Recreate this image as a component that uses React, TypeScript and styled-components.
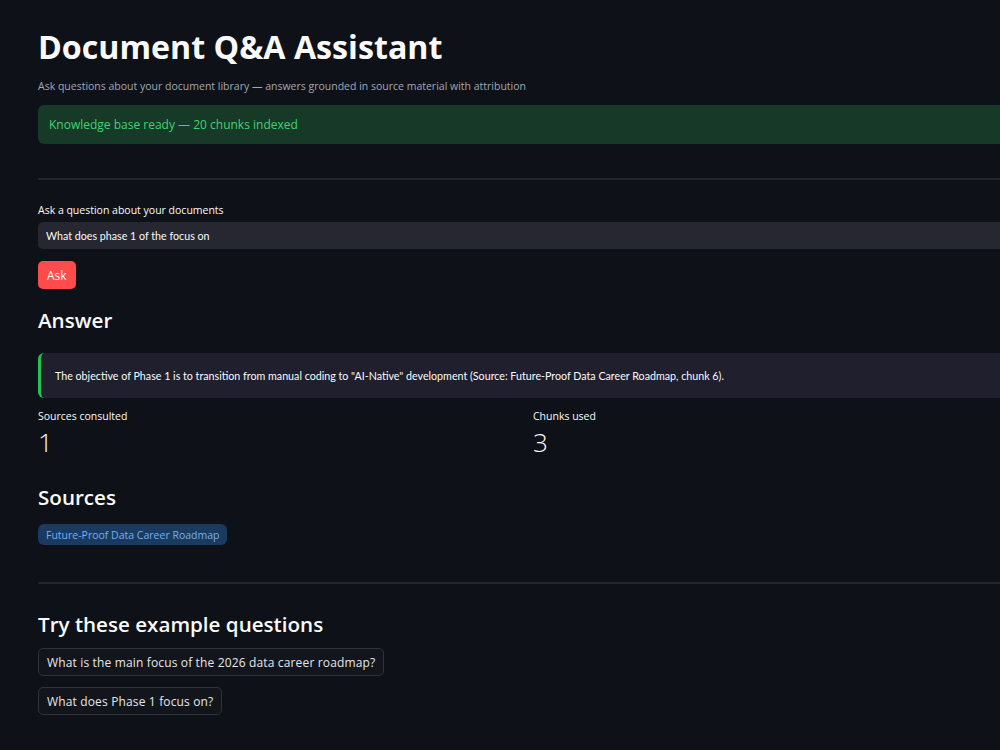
import React from "react";
import styled, { createGlobalStyle } from "styled-components";

const GlobalStyle = createGlobalStyle`
  html, body {
    margin: 0;
    padding: 0;
    background: #0e1117;
    overflow: hidden;
  }
  body {
    font-family: "Open Sans", "Noto Sans", sans-serif;
    color: #fafafa;
  }
`;

const HEAD = `"Open Sans", "Noto Sans", sans-serif`;
const BODY = `"Lato", "Noto Sans", sans-serif`;

const Page = styled.div`
  width: 974px;
  padding: 24px 0 40px 38px;
  display: flex;
  flex-direction: column;
`;

const Title = styled.h1`
  margin: 0;
  font-family: ${HEAD};
  font-weight: 700;
  font-size: 32.2px;
  line-height: 46px;
  color: #fafafa;
`;

const Caption = styled.p`
  margin: 8px 0 0;
  font-family: ${HEAD};
  font-size: 10.5px;
  line-height: 16px;
  color: #a3a8b4;
`;

const Alert = styled.div`
  margin-top: 11px;
  height: 39px;
  display: flex;
  align-items: center;
  padding: 0 11px;
  border-radius: 6px;
  background: #173928;
  color: #3dd56d;
  font-family: ${HEAD};
  font-size: 12px;
`;

const Divider = styled.hr<{ $top: number }>`
  margin: ${(p) => p.$top}px 0 0;
  border: none;
  height: 2px;
  background: #23252d;
`;

const Label = styled.label`
  margin-top: 22px;
  font-family: ${HEAD};
  font-size: 10.5px;
  line-height: 16px;
  color: #fafafa;
`;

const Input = styled.input`
  margin-top: 4px;
  height: 27px;
  box-sizing: border-box;
  border: none;
  outline: none;
  border-radius: 5px;
  background: #262730;
  padding: 0 8px;
  color: #fafafa;
  font-family: ${BODY};
  font-size: 10.7px;
`;

const AskButton = styled.button`
  margin-top: 12px;
  align-self: flex-start;
  height: 28px;
  padding: 0 9px;
  border: none;
  border-radius: 5px;
  background: #ff4b4b;
  color: #ffffff;
  font-family: ${HEAD};
  font-size: 12px;
`;

const Heading = styled.h2<{ $top: number }>`
  margin: ${(p) => p.$top}px 0 0;
  font-family: ${HEAD};
  font-weight: 600;
  font-size: 20.6px;
  line-height: 30px;
  color: #fafafa;
`;

const AnswerBox = styled.div`
  margin-top: 18px;
  height: 45px;
  display: flex;
  align-items: center;
  padding-left: 14px;
  border-left: 3px solid #21c354;
  border-radius: 6px;
  background: #1f1f2e;
  font-family: ${BODY};
  font-size: 10.7px;
  color: #fafafa;
`;

const Metrics = styled.div`
  margin-top: 10px;
  display: grid;
  grid-template-columns: 1fr 1fr;
  gap: 16px;
`;

const Metric = styled.div`
  display: flex;
  flex-direction: column;
`;

const MetricLabel = styled.div`
  font-family: ${HEAD};
  font-size: 10.5px;
  line-height: 16px;
  color: #fafafa;
`;

const MetricValue = styled.div`
  font-family: ${HEAD};
  font-weight: 300;
  font-size: 26px;
  line-height: 36px;
  color: #fafafa;
`;

const Chip = styled.span`
  margin-top: 12px;
  align-self: flex-start;
  height: 21px;
  display: inline-flex;
  align-items: center;
  padding: 0 8px;
  border-radius: 6px;
  background: #1b3a5f;
  color: #74b0f0;
  font-family: ${HEAD};
  font-size: 10.5px;
`;

const ExampleList = styled.div`
  margin-top: 9px;
  display: flex;
  flex-direction: column;
  align-items: flex-start;
  gap: 11px;
`;

const ExampleButton = styled.button`
  height: 28px;
  padding: 0 8px;
  border: 1px solid #30323a;
  border-radius: 5px;
  background: #12151c;
  color: #e6e6ea;
  font-family: ${HEAD};
  font-size: 12px;
  letter-spacing: 0.15px;
`;

const examples = [
  "What is the main focus of the 2026 data career roadmap?",
  "What does Phase 1 focus on?",
];

export default function App() {
  return (
    <>
      <GlobalStyle />
      <Page>
        <Title>Document Q&amp;A Assistant</Title>
        <Caption>
          Ask questions about your document library — answers grounded in source material with attribution
        </Caption>
        <Alert>Knowledge base ready — 20 chunks indexed</Alert>
        <Divider $top={34} />
        <Label>Ask a question about your documents</Label>
        <Input defaultValue="What does phase 1 of the focus on" />
        <AskButton>Ask</AskButton>
        <Heading $top={16}>Answer</Heading>
        <AnswerBox>
          The objective of Phase 1 is to transition from manual coding to "AI-Native" development (Source:
          Future-Proof Data Career Roadmap, chunk 6).
        </AnswerBox>
        <Metrics>
          <Metric>
            <MetricLabel>Sources consulted</MetricLabel>
            <MetricValue>1</MetricValue>
          </Metric>
          <Metric>
            <MetricLabel>Chunks used</MetricLabel>
            <MetricValue>3</MetricValue>
          </Metric>
        </Metrics>
        <Heading $top={22}>Sources</Heading>
        <Chip>Future-Proof Data Career Roadmap</Chip>
        <Divider $top={37} />
        <Heading $top={25}>Try these example questions</Heading>
        <ExampleList>
          {examples.map((q) => (
            <ExampleButton key={q}>{q}</ExampleButton>
          ))}
        </ExampleList>
      </Page>
    </>
  );
}
